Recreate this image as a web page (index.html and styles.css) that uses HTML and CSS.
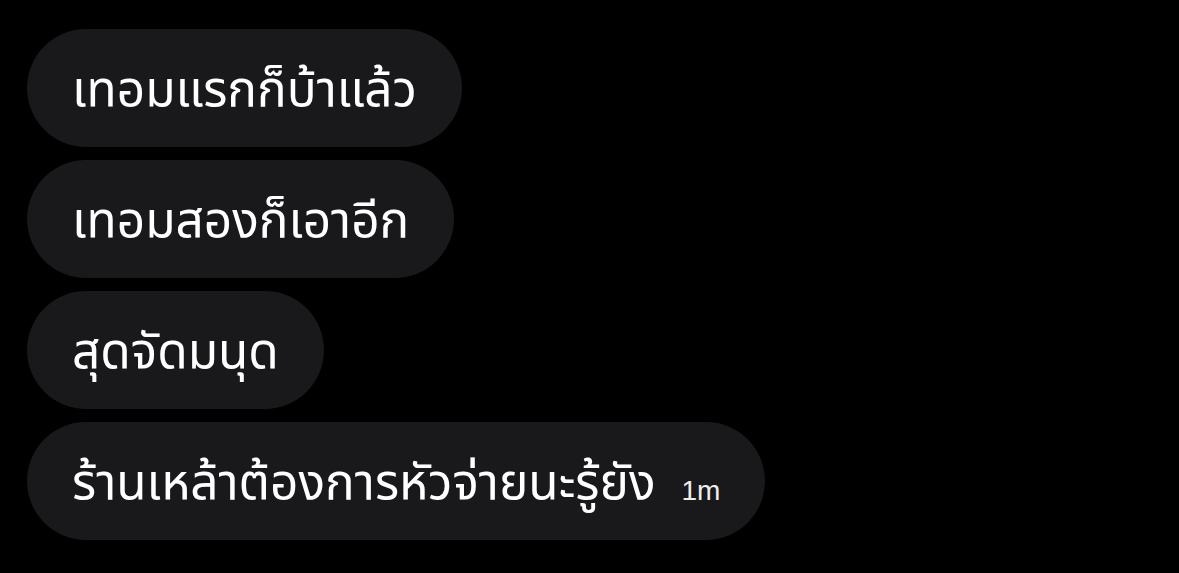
FILE: index.html
```html
<!DOCTYPE html>
<html lang="th">
<head>
<meta charset="utf-8">
<link rel="stylesheet" href="styles.css">
</head>
<body>
<div class="thread">
  <div class="bubble"><span class="text">เทอมแรกก็บ้าแล้ว</span></div>
  <div class="bubble"><span class="text">เทอมสองก็เอาอีก</span></div>
  <div class="bubble"><span class="text">สุดจัดมนุด</span></div>
  <div class="bubble"><span class="text">ร้านเหล้าต้องการหัวจ่ายนะรู้ยัง</span><span class="time">1m</span></div>
</div>
</body>
</html>
```
FILE: styles.css
```css
html, body {
  margin: 0;
  padding: 0;
  background: #000;
}
body {
  width: 1179px;
  height: 573px;
  overflow: hidden;
  font-family: "Noto Sans", "Noto Sans Thai", "Liberation Sans", sans-serif;
  color: #fff;
}
.thread {
  display: flex;
  flex-direction: column;
  align-items: flex-start;
  gap: 13px;
  padding: 29px 0 0 27px;
}
.bubble {
  display: flex;
  align-items: baseline;
  height: 118px;
  box-sizing: border-box;
  padding: 30px 45px 0 45px;
  border-radius: 59px;
  background: #19191b;
}
.text {
  font-size: 49.5px;
  line-height: 58px;
}
.time {
  font-size: 28px;
  margin-left: 26px;
  color: #eee;
  font-family: "Liberation Sans", sans-serif;
}
```
